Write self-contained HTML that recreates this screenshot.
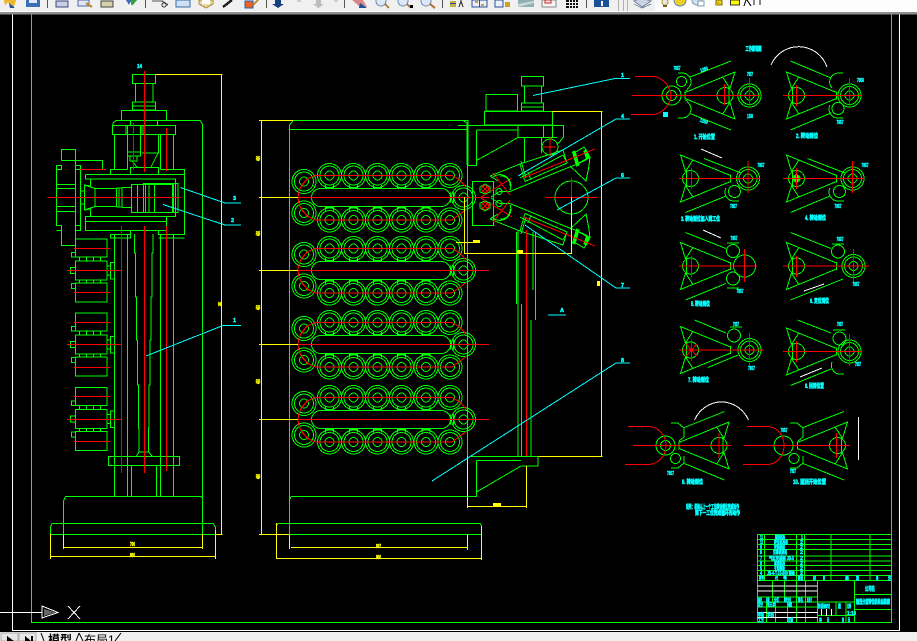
<!DOCTYPE html>
<html lang="zh">
<head>
<meta charset="utf-8">
<title>CAD</title>
<style>
html,body{margin:0;padding:0;background:#000;width:917px;height:641px;overflow:hidden}
svg{display:block;position:absolute;left:0;top:0}
.g{stroke:#0f0;fill:none;stroke-width:1}
.r{stroke:#f00;fill:none;stroke-width:1}
.y{stroke:#ff0;fill:none;stroke-width:1}
.b{stroke:#0ff;fill:none;stroke-width:1}
.w{stroke:#fff;fill:none;stroke-width:1}
.t{fill:#0ff;stroke:#0ff;stroke-width:.6;font:bold 6px "Liberation Sans","Noto Sans CJK SC",sans-serif}
.s{fill:#0ff;stroke:#0ff;stroke-width:.45;font:bold 5px "Liberation Sans","Noto Sans CJK SC",sans-serif}
.d{fill:#ff0;stroke:#ff0;stroke-width:.5;font:bold 5px "Liberation Sans",sans-serif}
.tab{fill:#000;font:12px "Liberation Sans","Noto Sans CJK SC",sans-serif}
</style>
</head>
<body>
<svg width="917" height="641" viewBox="0 0 917 641" xmlns="http://www.w3.org/2000/svg" shape-rendering="crispEdges">
<defs>
<g id="rt" class="g"><circle r="12"/><circle r="9.5"/><circle r="4.5"/><path d="M-4,9.5V12.5H4V9.5"/></g>
<g id="rb" class="g"><circle r="12"/><circle r="9.5"/><circle r="4.5"/><path d="M-4,-9.5V-12.5H4V-9.5"/></g>
<g id="lc" class="g"><circle r="12"/><circle r="9.5"/><circle r="4.5"/></g>
<g id="grp">
<use href="#rt" x="329.5" y="-22"/><use href="#rt" x="353.5" y="-22"/><use href="#rt" x="377.5" y="-22"/><use href="#rt" x="401.5" y="-22"/><use href="#rt" x="426" y="-22"/><use href="#lc" x="450" y="-22"/>
<use href="#rb" x="329.5" y="22.5"/><use href="#rb" x="353.5" y="22.5"/><use href="#rb" x="377.5" y="22.5"/><use href="#rb" x="401.5" y="22.5"/><use href="#rb" x="426" y="22.5"/><use href="#lc" x="450" y="22.5"/>
<use href="#lc" x="304" y="-16"/><use href="#lc" x="304" y="15.5"/><use href="#lc" x="463.5" y="0"/>
<rect class="g" x="311.5" y="-9" width="139" height="18" rx="9"/>
<path class="g" d="M450.5,-5V5M453.5,-5V5"/>
<path class="r" d="M298,0H489M315,-22H452M315,22.5H452"/>
<path class="r" d="M315,-22Q299,-16 298,0Q299,16 315,22.5M300,-9L308,-20M300,9L308,20M452,-22Q462,-17 466,-10M452,22.5L466,12"/>
</g>
<g id="tri" class="g">
<path d="M0,-4V4M0,-3L50,-23.5L45,-7M0,3L50,23.5L45,7M38,-18L45,-7M38,18L45,7M44,-8V8"/>
<circle cx="40" r="8"/>
</g>
<g id="con" class="g"><circle r="11.5"/><circle r="9"/><circle r="4.5"/></g>
<g id="arm">
<path class="g" d="M490,176L520,164L563,150M499,191.5H510L567,168L575,165L588,158M499,192L491,197M490,176L498,181"/>
<path class="g" d="M520,164L525,181.5M520,178L563,155L567,163L525,181.5M563,150L567,163M574,153L584,147L590,157L586,160L575,165M570,166L586,181L589,166L590,157"/>
<polygon points="572.5,152 575,151 579,165 576.5,166" fill="#0f0" stroke="#0f0"/>
<polygon points="584,151 586.5,150 589,158 586.5,159" fill="#0f0" stroke="#0f0"/>
<path class="g" d="M528,172L531,180M521,161L526,178"/>
<path class="r" d="M523,178L595,149M481,197L512,178M493,173L510,195"/>
<path class="g" d="M492,178A11,11 0 0 1 510,190M500,176A9,9 0 0 1 510,186"/>
<circle class="g" cx="499" cy="191.5" r="3"/>
<circle class="r" cx="485" cy="189" r="3.5"/>
<path class="g" d="M480,187L485,184L490,187L490,192L485,194L480,192Z"/>
<path class="r" d="M482,186L488,192M482,192L488,186"/>
</g>
</defs>

<rect width="917" height="641" fill="#000"/>

<!-- frames -->
<path class="w" d="M12.5,14V630.5H899.5V14"/>
<path class="g" d="M31.5,14V622.5H891.5V14"/>

<!-- left view -->
<g class="g">
<rect x="132.5" y="74.5" width="23" height="9"/>
<path d="M135.5,83V102M153,83V102"/>
<rect x="132.5" y="102" width="23" height="8"/><path d="M132.5,106H155.5"/>
<rect x="121.5" y="110.5" width="45" height="10"/>
<path d="M113,125V123L116,120.5H200L202.5,124V523.5"/>
<rect x="112.5" y="125.5" width="63" height="9"/>
<path d="M126,125.5V134M130.5,120.5V125M157.5,120.5V125M141,125V134M143,125V134"/>
<path d="M114.5,134V169.5M127.5,134V169.5M160.5,134V169.5M173.5,134V169.5"/>
<path d="M127.5,125V152M140.5,125V152M127.5,152H140.5V156H127.5M130,156V161H137V156M132,161L137,167M158.5,134V153H142M158,153L151,167"/>
<path d="M130.5,174V167.5H158.5V174"/>
<path d="M110.5,174V169.5H127.5M160.5,169.5H184.5V234.5H158.5V230.5M85.5,174.5H184.5M85.5,174.5V179H175.5V216.5H85.5V230.5H166.5V216.5M85.5,221.5H166.5"/>
<path d="M90.5,179V186L84.5,185V210L90.5,209V216.5M84.5,185L95,188.5H116.5V206.5H95L84.5,210"/>
<path d="M95,188.5V206.5M119,188V207M122,187.5V207.5M116.5,188H122M116.5,207H122M122,187.5H131M122,207.5H131"/>
<rect x="131.5" y="184.5" width="41" height="28"/>
<rect x="143.5" y="183.5" width="34.5" height="29"/>
<path d="M137.5,184.5V212.5M145.5,184V212M149,184V212M154.5,184V212M173.5,184V212"/>
<path d="M110.5,234.5H130.5V230.5M110.5,234.5V238H130.5V234.5M158.5,238H184.5M110.5,234.5"/>
<path d="M61.5,160.5H102.5V169.5M61.5,160.5V149.5H75.5V245.5H61.5V225.5H56.5V165.5H61.5V169.5H56.5M75.5,165.5H80.5V230.5H75.5M75.5,225.5H80.5M75.5,169.5H80.5M56.5,230.5H61.5V225.5M56.5,184.5H75.5M56.5,188.5H75.5M56.5,206.5H75.5M56.5,211.5H75.5M80.5,191H84.5M80.5,204H84.5"/>
<path d="M114.5,234V496.5M127.5,234V496.5M160.5,234V496.5M173.5,234V496.5M131.5,465V496.5M156.5,465V496.5"/>
<path d="M134.5,234V253H135.5V297H136.5V340H137.5V385H138.5V428H139V452L136.5,456M153,234V253H152V297H151V340H150V385H149V428H148.5V452L152,456M139,452H148.5"/>
<rect x="108.5" y="456.5" width="71" height="9"/>
<path d="M63.5,547V501L65.5,496.5H201L202.5,498M50.5,534V527L52,523.5H213L215.5,527V534"/>
<path d="M63.5,523.5V534.5M202.5,523.5V534.5M50.5,534.5H215.5"/>
</g>
<!-- motor stacks -->
<g class="g">
<path id="m1" d="M75.5,239H107V257H75.5ZM71.5,252.5H75.5V257H71.5ZM79.5,257V261M86.5,257V261M93.5,257V261M100.5,257V261M75.5,261H107V280H75.5ZM70.5,267.5H75.5V273.5H70.5ZM107,266H110.5V275H107M110.5,262.5H114.5V279H110.5ZM79.5,280V283M86.5,280V283M93.5,280V283M100.5,280V283M75.5,283H107V302H75.5ZM71.5,283.5H75.5V288.5H71.5Z"/>
<use href="#m1" y="74"/>
<use href="#m1" y="148.5"/>
</g>
<path class="r" d="M74,248.5H110M67,270.5H121M74,292.5H110M74,322.5H110M67,344.5H121M74,367.5H110M74,396.5H110M67,419.5H121M74,441.5H110"/>
<path class="r" d="M144.5,71V172M144.5,226V473M133.5,123V170M121.5,226V473M166.5,128V171M166.5,226V471M47.5,197.5H180.5M80,169.5H106"/>
<path class="y" d="M155,74.5H222.5M221.5,74.5V534.5M215.5,534.5H222.5M50.5,534V559M215.5,530V559M50.5,556.5H215.5M63.5,534V549M202.5,534V549M63.5,547.5H202.5"/>
<path class="b" d="M180.5,187.5L225,203H241M163,204.5L225,225H241M146,356L223,325.5H241"/>
<text class="s" x="137" y="68" textLength="5" lengthAdjust="spacingAndGlyphs">14</text>
<text class="s" x="233" y="200" textLength="3" lengthAdjust="spacingAndGlyphs">3</text>
<text class="s" x="231" y="222" textLength="3" lengthAdjust="spacingAndGlyphs">2</text>
<text class="s" x="233" y="322" textLength="3" lengthAdjust="spacingAndGlyphs">1</text>
<text class="d" x="218" y="306" textLength="4" lengthAdjust="spacingAndGlyphs">940</text>
<text class="d" x="130" y="546" textLength="5" lengthAdjust="spacingAndGlyphs">700</text>
<text class="d" x="130" y="557" textLength="5" lengthAdjust="spacingAndGlyphs">800</text>

<!-- middle view -->
<g class="g">
<path d="M289.5,547V125L293,120.5H468V165.5H476.5V130M289.5,129.5H467.5"/>
<path d="M467.5,165V456.5"/>
<path d="M291,496.5H476.5V460.5M276.5,534V526L278,523.5H480L481.5,526V534M276.5,534.5H481.5"/>
<path d="M289.5,500L291,496.5"/>
</g>
<use href="#grp" y="197.5"/><use href="#grp" y="270.5"/><use href="#grp" y="344.5"/><use href="#grp" y="419.5"/>
<path class="y" d="M259,120.5H293M261.5,120.5V534.5M259,197.5H298M259,270.5H298M259,344.5H298M259,419.5H298M259,534.5H289"/>
<path class="y" d="M291,547.5H467.5M467.5,534V550M289.5,534V549M276.5,523V559M481.5,526V560M276.5,558.5H481.5"/>
<text class="d" x="256" y="161" transform="rotate(-90 258 159)" textLength="5" lengthAdjust="spacingAndGlyphs">400</text>
<text class="d" x="256" y="236" transform="rotate(-90 258 234)" textLength="5" lengthAdjust="spacingAndGlyphs">450</text>
<text class="d" x="256" y="310" transform="rotate(-90 258 308)" textLength="5" lengthAdjust="spacingAndGlyphs">450</text>
<text class="d" x="256" y="384" transform="rotate(-90 258 382)" textLength="5" lengthAdjust="spacingAndGlyphs">450</text>
<text class="d" x="256" y="479" transform="rotate(-90 258 477)" textLength="5" lengthAdjust="spacingAndGlyphs">480</text>
<text class="d" x="376" y="548" textLength="5" lengthAdjust="spacingAndGlyphs">907</text>
<text class="d" x="376" y="559" textLength="5" lengthAdjust="spacingAndGlyphs">900</text>

<!-- right side mechanism -->
<g class="g">
<rect x="521.5" y="76.5" width="22" height="9.5"/>
<path d="M524.5,86V103M541.5,86V103"/>
<rect x="521.5" y="103" width="22" height="8"/><path d="M521.5,107H543.5"/>
<rect x="486" y="94.5" width="31.5" height="16.5"/>
<rect x="484.5" y="111.5" width="68" height="13.5"/>
<path d="M458,125.5H563.5V137L557,145M458,120.5H463L467,123V165M476.5,130H518V137.5L476.5,160.5M518,125.5V137.5H557M543.5,125.5V137.5M552.5,125.5V137.5"/>
<path d="M524.5,137.5V162M541.5,137.5V153"/>
<circle cx="550" cy="147" r="8"/>
<rect x="472.5" y="181.5" width="21" height="44"/>
<circle cx="571.5" cy="197.5" r="16.5"/>
<path d="M518,230V456M516.5,232V304M521.5,304V456M533,232V290M535.5,232V320M531,320V456M521.5,456.5H538V466H521.5M470,456.5H521.5M476.5,460.5H521"/>
<path d="M521,466L476.5,492"/>
</g>
<use href="#arm"/>
<use href="#arm" transform="translate(0,395) scale(1,-1)"/>
<path class="r" d="M546,197.5H597M571.5,178V215M481,197.5H489M543,147H556M550,137V156M526.5,230V456M458,270.5H488"/>
<path class="y" d="M552,111.5H602.5M601.5,111.5V456.5M538,456.5H602.5M464.5,197V253.5H571.5V197M456,242.5H478M467.5,456V508M526.5,466V508M467.5,506.5H526.5"/>
<rect x="473" y="240" width="7" height="3" fill="#ff0"/>
<rect x="517" y="250" width="6" height="3" fill="#ff0"/>
<rect x="597" y="281" width="3" height="5" fill="#ff0"/>
<rect x="493" y="503" width="8" height="3" fill="#ff0"/>
<path class="b" d="M533,95.5L615,78.5H630M518,176L616,119H630M557,210L616,178H630M525,225L616,288H630M432,481L616,363H630M548,315H566"/>
<g class="s"><text x="621" y="77" textLength="3" lengthAdjust="spacingAndGlyphs">1</text><text x="621" y="118" textLength="3" lengthAdjust="spacingAndGlyphs">4</text><text x="621" y="177" textLength="3" lengthAdjust="spacingAndGlyphs">6</text><text x="621" y="287" textLength="3" lengthAdjust="spacingAndGlyphs">7</text><text x="621" y="362" textLength="3" lengthAdjust="spacingAndGlyphs">8</text><text x="560" y="312" textLength="4" lengthAdjust="spacingAndGlyphs">A</text></g>

<!-- diagrams -->
<path class="w" d="M771,65A30,30 0 0 1 827,67M701,149L722,158M703,230L721,238M804,291L824,284M694.5,420A30,32 0 0 1 748.5,420M858.5,417V460M800,377L822,368"/>

<!-- D1 -->
<use href="#tri" transform="translate(685,95.5)"/>
<g class="g"><circle cx="671.5" cy="95.5" r="9.5"/><circle cx="671.5" cy="95.5" r="5"/><circle cx="681.5" cy="81.5" r="5"/>
<path d="M678,73H683A9,9 0 0 1 690,86L686,91M678,118H683A9,9 0 0 0 690,105L686,100M690,77L731,61M690,113.5L731,130"/></g>
<use href="#con" x="749.5" y="95.5"/>
<path class="r" d="M635,76.5H653C660,76.5 670,84 671,95.5C670,107 660,114.5 653,114.5H631M632,95.5H760M749.5,78V108M724.5,84V105"/>
<!-- D2 -->
<use href="#tri" transform="translate(836.5,95.5) scale(-1,1)"/>
<g class="g"><use href="#con" x="849.5" y="95.5"/><circle cx="838" cy="108.5" r="6"/><path d="M790.5,61L831,78M790.5,130L831,113M843,73H838A9,9 0 0 0 832,88M843,118H838A9,9 0 0 1 830,105"/></g>
<path class="r" d="M783,95.5H861M849.5,78V108M796.5,85V106"/>
<!-- D3 -->
<use href="#tri" transform="translate(730.5,178.5) scale(-1,1)"/>
<g class="g"><use href="#con" x="748" y="178.5"/><circle cx="734.5" cy="191.5" r="6"/><path d="M704,158.5L741,173M685.5,212.5L726,196M739,201H733A9,9 0 0 1 726,188"/></g>
<path class="r" d="M679,178.5H760M748,161V193M691.5,168V189"/>
<!-- D4 -->
<use href="#tri" transform="translate(836.5,178.5) scale(-1,1)"/>
<g class="g"><use href="#con" x="852.5" y="178.5"/><circle cx="839.5" cy="191.5" r="6"/><path d="M807.5,158.5L845,173M790.5,212.5L830,196M844,201H838A9,9 0 0 1 830,188"/></g>
<circle cx="796.5" cy="178.5" r="4" fill="#0f0"/>
<path class="r" d="M783,178.5H864M852.5,161V193M796.5,168V189"/>
<!-- D5 -->
<use href="#tri" transform="translate(730.5,266) scale(-1,1)"/>
<g class="g"><circle cx="744.5" cy="266" r="11"/><circle cx="733" cy="251" r="6.5"/><circle cx="733" cy="278.5" r="6.5"/><path d="M685.5,232.5L726,248.5M685.5,300L726,283.5M727,243H739M727,288H739"/></g>
<path class="r" d="M679,266H757M744.5,249V282M691.5,256V277"/>
<!-- D6 -->
<use href="#tri" transform="translate(836.5,266) scale(-1,1)"/>
<g class="g"><use href="#con" x="853.5" y="266"/><circle cx="838" cy="251.5" r="6.5"/><path d="M790.5,232.5L831,248.5M790.5,300L843,279M832,244H844"/></g>
<path class="r" d="M783,266H869M853.5,249V282M796.5,256V277"/>
<!-- D7 -->
<use href="#tri" transform="translate(730.5,350) scale(-1,1)"/>
<g class="g"><use href="#con" x="749.5" y="350"/><circle cx="734" cy="335.5" r="6.5"/><path d="M694.5,320L726,333M708,367.5L738,355M730,327H742"/></g>
<path class="r" d="M679,350H764M749.5,333V367M691.5,340V361M686,344L697,356M686,356L697,344"/>
<!-- D8 -->
<use href="#tri" transform="translate(836.5,351.5) scale(-1,1)"/>
<g class="g"><use href="#con" x="849.5" y="351.5"/><circle cx="839.5" cy="338.5" r="6.5"/><path d="M797.5,320L831,333M790.5,385.5L831,369M844,374H838A9,9 0 0 1 832,362M833,330H845"/></g>
<path class="r" d="M783,351.5H861M849.5,334V366M796.5,341V362"/>
<!-- Bottom L -->
<use href="#tri" transform="translate(679,445.5)"/>
<g class="g"><circle cx="665.5" cy="445.5" r="9.5"/><circle cx="665.5" cy="445.5" r="5"/><circle cx="675.5" cy="458.5" r="5"/>
<path d="M684.5,427.5L724.5,411.5M684.5,463.5L724.5,480M671,423H678L684,428V437L679,441M671,468H678L684,463V456"/></g>
<path class="r" d="M628,426.5H648C658,426.5 666,435 666,445.5C666,456 658,464.5 648,464.5H625M633,445.5H731M719,433V458"/>
<!-- Bottom R -->
<use href="#tri" transform="translate(797.5,445.5)"/>
<g class="g"><circle cx="783.5" cy="445.5" r="9.5"/><circle cx="794" cy="458.5" r="5"/>
<path d="M803,427.5L844,411.5M803,463.5L844,480M790,423H797L803,428V437L798,441M790,468H797L803,463V456"/></g>
<path class="r" d="M747,426.5H767C777,426.5 784,435 784,445.5C784,456 777,464.5 767,464.5H743M744,445.5H850M836.5,433V458"/>

<!-- labels -->
<g class="t">
<text x="745.5" y="51" textLength="16" lengthAdjust="spacingAndGlyphs">工作原理图</text>
<text x="694" y="139" textLength="21" lengthAdjust="spacingAndGlyphs">1. 开始位置</text>
<text x="796" y="138" textLength="22" lengthAdjust="spacingAndGlyphs">2. 转动到位</text>
<text x="681" y="221" textLength="39" lengthAdjust="spacingAndGlyphs">3. 转动到位加入到工位</text>
<text x="805" y="220" textLength="21" lengthAdjust="spacingAndGlyphs">4. 转动到位</text>
<text x="691" y="306" textLength="19" lengthAdjust="spacingAndGlyphs">5. 转动到位</text>
<text x="810" y="303" textLength="19" lengthAdjust="spacingAndGlyphs">6. 定位到位</text>
<text x="688" y="382" textLength="21" lengthAdjust="spacingAndGlyphs">7. 转动到位</text>
<text x="805" y="388" textLength="19" lengthAdjust="spacingAndGlyphs">8. 回到位置</text>
<text x="682" y="484" textLength="21" lengthAdjust="spacingAndGlyphs">9. 转动到位</text>
<text x="793" y="484" textLength="33" lengthAdjust="spacingAndGlyphs">10. 返回开始位置</text>
<text x="686" y="509" textLength="53" lengthAdjust="spacingAndGlyphs">说明：机构从上一个工位转动到位完成动作</text>
<text x="695" y="515" textLength="45" lengthAdjust="spacingAndGlyphs">到下一工位完成循环的动作</text>
</g>
<g class="s">
<text x="673.5" y="70" textLength="7" lengthAdjust="spacingAndGlyphs">7857</text>
<text x="747" y="76" textLength="6" lengthAdjust="spacingAndGlyphs">7857</text>
<text x="747" y="118" textLength="6" lengthAdjust="spacingAndGlyphs">150</text>
<text x="700" y="71" textLength="8" lengthAdjust="spacingAndGlyphs" transform="rotate(-20 704 69)">1250</text>
<text x="700" y="123" textLength="8" lengthAdjust="spacingAndGlyphs" transform="rotate(20 704 121)">1250</text>
<text x="857" y="82" textLength="7" lengthAdjust="spacingAndGlyphs">7856</text>
<text x="836.5" y="124" textLength="7" lengthAdjust="spacingAndGlyphs">7857</text>
<text x="757.5" y="167" textLength="7" lengthAdjust="spacingAndGlyphs">7857</text>
<text x="730" y="208" textLength="7" lengthAdjust="spacingAndGlyphs">7857</text>
<text x="861.5" y="167" textLength="7" lengthAdjust="spacingAndGlyphs">7857</text>
<text x="834.5" y="208" textLength="7" lengthAdjust="spacingAndGlyphs">7857</text>
<text x="730.5" y="240" textLength="7" lengthAdjust="spacingAndGlyphs">7857</text>
<text x="736.5" y="293" textLength="7" lengthAdjust="spacingAndGlyphs">7857</text>
<text x="836.5" y="241" textLength="7" lengthAdjust="spacingAndGlyphs">7857</text>
<text x="852.5" y="286" textLength="7" lengthAdjust="spacingAndGlyphs">7857</text>
<text x="733" y="326" textLength="6" lengthAdjust="spacingAndGlyphs">7857</text>
<text x="748" y="370" textLength="7" lengthAdjust="spacingAndGlyphs">7857</text>
<text x="837" y="326" textLength="6" lengthAdjust="spacingAndGlyphs">7857</text>
<text x="855" y="366" textLength="6" lengthAdjust="spacingAndGlyphs">7857</text>
<text x="667" y="475" textLength="7" lengthAdjust="spacingAndGlyphs">7857</text>
<text x="780.5" y="432" textLength="7" lengthAdjust="spacingAndGlyphs">7857</text>
<text x="790" y="473" textLength="6" lengthAdjust="spacingAndGlyphs">7857</text>
</g>
<rect x="663" y="112" width="5" height="5" fill="#0ff"/>

<!-- title block -->
<path class="g" d="M757.5,534.5H891.5M757.5,539.5H891.5M757.5,544.5H891.5M757.5,549.5H891.5M757.5,556H891.5M757.5,561H891.5M757.5,565.5H891.5M757.5,570.5H891.5M757.5,575.5H891.5M757.5,580.5H891.5M757.5,534.5V622.5M764.5,534.5V580.5M796.5,534.5V580.5M804.5,534.5V580.5M831,534.5V580.5M870,534.5V580.5"/>
<path class="g" d="M772.5,580.5V602M784.5,580.5V602M796.5,580.5V622.5M805.5,580.5V622.5M817.5,580.5V622.5M766.5,602V622.5M775.5,602V622.5M787.5,602V622.5M757.5,597H817.5M757.5,602H817.5M757.5,607H817.5M817.5,602H854.5M817.5,615.5H854.5M836,602V615.5M846,602V622.5M854.5,580.5V622.5M854.5,594.5H891.5M854.5,609.5H891.5"/>
<path class="w" d="M757.5,586H817.5M757.5,591H817.5M757.5,612.5H817.5M757.5,617.5H817.5M821.5,609V616M826.5,609V616M831.5,609V616"/>
<g class="s">
<text x="760" y="539" textLength="3" lengthAdjust="spacingAndGlyphs">11</text><text x="760" y="544" textLength="3" lengthAdjust="spacingAndGlyphs">10</text><text x="760" y="549" textLength="2" lengthAdjust="spacingAndGlyphs">9</text><text x="760" y="554" textLength="2" lengthAdjust="spacingAndGlyphs">8</text><text x="760" y="560" textLength="2" lengthAdjust="spacingAndGlyphs">7</text><text x="760" y="565" textLength="2" lengthAdjust="spacingAndGlyphs">6</text><text x="760" y="570" textLength="2" lengthAdjust="spacingAndGlyphs">5</text><text x="760" y="575" textLength="2" lengthAdjust="spacingAndGlyphs">4</text>
<text x="775" y="539" textLength="10" lengthAdjust="spacingAndGlyphs">输送机构</text><text x="774" y="544" textLength="14" lengthAdjust="spacingAndGlyphs">转位机构组</text><text x="774" y="549" textLength="11" lengthAdjust="spacingAndGlyphs">传动轴组</text><text x="773" y="554" textLength="14" lengthAdjust="spacingAndGlyphs">支撑机架组</text><text x="769" y="560" textLength="25" lengthAdjust="spacingAndGlyphs">气缸安装架 JB-5</text><text x="774" y="565" textLength="11" lengthAdjust="spacingAndGlyphs">减速机构</text><text x="774" y="570" textLength="11" lengthAdjust="spacingAndGlyphs">主动链轮</text><text x="767" y="575" textLength="28" lengthAdjust="spacingAndGlyphs">JB-4-T-10-800 链条</text>
<text x="801" y="539" textLength="2" lengthAdjust="spacingAndGlyphs">1</text><text x="800" y="544" textLength="3" lengthAdjust="spacingAndGlyphs">2</text><text x="800" y="549" textLength="3" lengthAdjust="spacingAndGlyphs">2</text><text x="800" y="554" textLength="3" lengthAdjust="spacingAndGlyphs">2</text><text x="800" y="560" textLength="3" lengthAdjust="spacingAndGlyphs">2</text><text x="800" y="565" textLength="3" lengthAdjust="spacingAndGlyphs">2</text><text x="800" y="570" textLength="3" lengthAdjust="spacingAndGlyphs">2</text><text x="800" y="575" textLength="3" lengthAdjust="spacingAndGlyphs">2</text>
<text x="759" y="580" textLength="5" lengthAdjust="spacingAndGlyphs">序号</text><text x="775" y="580" textLength="3" lengthAdjust="spacingAndGlyphs">代</text><text x="783" y="580" textLength="4" lengthAdjust="spacingAndGlyphs">号</text><text x="798" y="580" textLength="5" lengthAdjust="spacingAndGlyphs">数量</text><text x="813" y="580" textLength="3" lengthAdjust="spacingAndGlyphs">材</text><text x="823" y="580" textLength="2" lengthAdjust="spacingAndGlyphs">料</text><text x="845" y="580" textLength="4" lengthAdjust="spacingAndGlyphs">单</text><text x="856" y="580" textLength="3" lengthAdjust="spacingAndGlyphs">重</text><text x="876" y="580" textLength="2.5" lengthAdjust="spacingAndGlyphs">备</text><text x="888" y="580" textLength="3" lengthAdjust="spacingAndGlyphs">注</text>
<text x="758" y="602" textLength="4" lengthAdjust="spacingAndGlyphs">标记</text><text x="766" y="602" textLength="3.5" lengthAdjust="spacingAndGlyphs">处数</text><text x="774" y="602" textLength="5" lengthAdjust="spacingAndGlyphs">分区</text><text x="784" y="602" textLength="7" lengthAdjust="spacingAndGlyphs">更改文件</text><text x="798" y="602" textLength="5" lengthAdjust="spacingAndGlyphs">签名</text><text x="807" y="602" textLength="5" lengthAdjust="spacingAndGlyphs">年月日</text>
<text x="758" y="606.5" textLength="5" lengthAdjust="spacingAndGlyphs">设计</text><text x="767" y="606.5" textLength="8" lengthAdjust="spacingAndGlyphs">张三丰</text><text x="788" y="606.5" textLength="4" lengthAdjust="spacingAndGlyphs">标</text>
<text x="758" y="616.5" textLength="6" lengthAdjust="spacingAndGlyphs">审核</text><text x="767" y="616.5" textLength="7" lengthAdjust="spacingAndGlyphs">李四</text>
<text x="758" y="622" textLength="6" lengthAdjust="spacingAndGlyphs">工艺</text><text x="788" y="622" textLength="5" lengthAdjust="spacingAndGlyphs">日期</text>
<text x="818" y="608" textLength="12" lengthAdjust="spacingAndGlyphs">阶段标记</text><text x="838" y="608" textLength="3" lengthAdjust="spacingAndGlyphs">重</text><text x="847" y="608" textLength="4" lengthAdjust="spacingAndGlyphs">比例</text>
<text x="847" y="615" textLength="9" lengthAdjust="spacingAndGlyphs">1:10</text>
<text x="819" y="622" textLength="3" lengthAdjust="spacingAndGlyphs">共</text><text x="827" y="622" textLength="2" lengthAdjust="spacingAndGlyphs">页</text><text x="842" y="622" textLength="2" lengthAdjust="spacingAndGlyphs">第</text><text x="848" y="622" textLength="2" lengthAdjust="spacingAndGlyphs">页</text>
</g>
<g class="t">
<text x="865" y="591" textLength="10" lengthAdjust="spacingAndGlyphs">公司名</text>
<text x="856" y="604" textLength="34" lengthAdjust="spacingAndGlyphs">输送分度转位机构总装图</text>
</g>

<!-- UCS icon -->
<path class="w" d="M0,612.5H42M42,606L58,612.5L42,618ZM68,606L80,619M80,606L68,619"/>
<path d="M44,609L56,612.5L44,616Z" fill="#666"/>

<!-- bottom bar -->
<rect x="0" y="632" width="917" height="9" fill="#f0f0f0"/>
<rect x="1" y="633" width="17" height="8" fill="#e6e6e6" stroke="#b0b0b0"/>
<rect x="19" y="633" width="17" height="8" fill="#e6e6e6" stroke="#b0b0b0"/>
<path d="M7,636L14,641H7Z" fill="#000"/>
<path d="M25,636L31,641H25Z M31,636H33V641H31Z" fill="#000"/>
<path d="M41,633L44,641M79,633L76,641M115,641L121,633M79,633L83,641" stroke="#000" fill="none" shape-rendering="auto"/>
<text class="tab" x="48" y="644" style="font-weight:bold">模型</text>
<text class="tab" x="84" y="644">布局1</text>

<!-- toolbar -->
<rect x="0" y="0" width="917" height="11" fill="#f0f0f0"/>
<rect x="655" y="0" width="262" height="11" fill="#fdfdfd"/>
<rect x="0" y="11" width="917" height="1" fill="#fff"/>
<rect x="0" y="12" width="917" height="2.5" fill="#8f8f8f"/>
<path stroke="#555" fill="none" d="M47.5,0V8M145.5,0V8M266.5,0V8M344.5,0V8M442.5,0V8M586.5,0V8"/>
<path stroke="#b0b0b0" fill="none" d="M618.5,0V11M623.5,0V11M627.5,0V11"/>
<!-- icons -->
<path d="M4,0H16L14,7H11L8,2L5,5Z" fill="#e8b830"/><path d="M9,3L15,8H10Z" fill="#1f4f9c"/>
<rect x="26" y="0" width="14" height="7" fill="#3d6fb5"/><rect x="29" y="0" width="8" height="3" fill="#dfe8f5"/>
<rect x="56" y="1" width="12" height="6" fill="#c9cfe0" stroke="#3a4a80"/>
<rect x="78" y="0" width="11" height="6" fill="#dfe6f5" stroke="#4a6aa8"/><path d="M86,3L92,7" stroke="#c08020" stroke-width="2"/>
<rect x="101" y="1" width="12" height="6" fill="#d8d2a8" stroke="#444"/>
<path d="M123,0H138L133,8H128Z" fill="#f4f4f4"/><path d="M130,0H137L132,6Z" fill="#3a9a4a"/><path d="M126,0H131L129,5Z" fill="#3a6fc0"/>
<path d="M152,1H162L168,5" stroke="#555" fill="none" stroke-width="1.3"/><circle cx="164" cy="5" r="2" fill="none" stroke="#333"/>
<rect x="176" y="0" width="14" height="7" fill="#cfe0f3" stroke="#3a6aa8"/>
<path d="M199,0H213V4L206,8L199,4Z" fill="#e8d9a8" stroke="#b08a30"/><rect x="202" y="0" width="8" height="4" fill="#fff"/>
<path d="M223,7L232,0" stroke="#222" stroke-width="2.5"/>
<rect x="245" y="1" width="8" height="7" fill="#f06020" stroke="#2a5fb0"/><path d="M253,5L258,0" stroke="#b09020" stroke-width="1.5"/>
<path d="M275,0H281V4H284L278,8L272,4H275Z" fill="#15407f"/>
<path d="M297,0H301V2H297Z" fill="#cfcfcf"/><path d="M316,0H321V4H324L318.5,8L313,4H316Z" fill="#bdbdbd"/><path d="M334,0H338V2H334Z" fill="#cfcfcf"/>
<path d="M352,0H363L367,7H360Z" fill="#d88888"/><path d="M360,3L367,8H359Z" fill="#1f4f9c"/>
<circle cx="381" cy="1" r="5" fill="#dbe8f5" stroke="#6b8bb0"/><path d="M385,4L389,8" stroke="#b5722a" stroke-width="2"/>
<circle cx="403" cy="1" r="5" fill="#dbe8f5" stroke="#6b8bb0"/><path d="M407,4L411,8" stroke="#b5722a" stroke-width="2"/><path d="M410,5H413V8H410Z" fill="#000"/>
<circle cx="426" cy="1" r="5" fill="#dbe8f5" stroke="#6b8bb0"/><path d="M430,4L435,8" stroke="#b5722a" stroke-width="2"/>
<rect x="450" y="1" width="6" height="6" fill="#c7b040"/><rect x="450" y="3" width="6" height="1" fill="#2050a0"/><path d="M459,7L461,1L463,7" stroke="#333" fill="none"/>
<rect x="472" y="0" width="15" height="7" fill="#e8f0fa" stroke="#2b4f9a"/><rect x="475" y="1" width="3" height="2" fill="#d0a020"/><rect x="481" y="4" width="3" height="2" fill="#d0a020"/><path d="M479.5,0V7" stroke="#2b4f9a"/>
<rect x="495" y="0" width="8" height="7" fill="#e8f0fa" stroke="#2b4f9a"/><rect x="505" y="2" width="5" height="5" fill="#d0a020"/>
<path d="M518,0H534V7H518Z" fill="#8fb0b5"/><path d="M518,4L534,1V3L518,7Z" fill="#c9d8da"/>
<rect x="542" y="0" width="14" height="7" fill="#f4f4f4" stroke="#888"/><path d="M545,0H551V3H545Z" fill="none" stroke="#d02020"/>
<rect x="566" y="0" width="12" height="8" fill="#111"/><path d="M566,2.5H578M566,5.5H578" stroke="#eee"/><path d="M569.5,0V8M572.5,0V8M575.5,0V8" stroke="#eee"/>
<rect x="594" y="0" width="15" height="7" fill="#1a4f9a"/><rect x="601" y="1" width="2" height="5" fill="#fff"/>
<path d="M634,1L642,-2L651,1L642,7Z" fill="#c9d4e0" stroke="#7a8aa0"/><path d="M634,4L642,8L651,4" stroke="#7a8aa0" fill="none"/>
<circle cx="665" cy="2" r="3" fill="#e8e8e8" stroke="#b09a30"/><rect x="663" y="5" width="4" height="2" fill="#806020"/>
<circle cx="680" cy="0" r="6" fill="#f4d020" stroke="#5a86b5"/>
<circle cx="697" cy="0" r="5" fill="#cfe0ee" stroke="#7a9ab5"/><rect x="698" y="1" width="6" height="5" fill="#fff" stroke="#7a9ab5"/>
<rect x="716" y="0" width="6" height="5" fill="#e8d020" stroke="#806a10"/><rect x="715" y="2" width="4" height="3" fill="#d0a810"/>
<rect x="730.5" y="0" width="9" height="5" fill="#ff0" stroke="#333"/>
<path d="M744,6L746,0M747,0L751,6M754,0V5M760,0V5" stroke="#111" fill="none"/>
</svg>
</body>
</html>
